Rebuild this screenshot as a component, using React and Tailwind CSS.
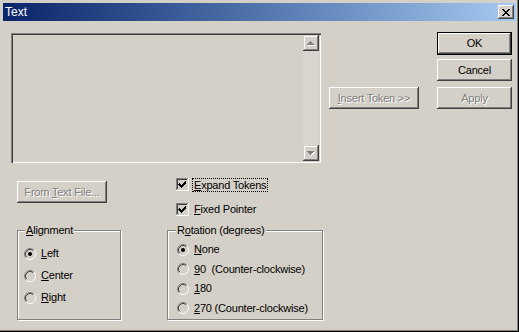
import React from "react";

function Radio({ checked }) {
  return (
    <svg width="12" height="12" viewBox="0 0 12 12" className="shrink-0">
      <circle cx="6" cy="6" r="5" fill="#d4d0c8" />
      <path d="M2.11 9.89 A5.5 5.5 0 0 1 9.89 2.11" fill="none" stroke="#808080" strokeWidth="1" />
      <path d="M9.89 2.11 A5.5 5.5 0 0 1 2.11 9.89" fill="none" stroke="#ffffff" strokeWidth="1" />
      <path d="M2.82 9.18 A4.5 4.5 0 0 1 9.18 2.82" fill="none" stroke="#404040" strokeWidth="1" />
      <path d="M9.18 2.82 A4.5 4.5 0 0 1 2.82 9.18" fill="none" stroke="#d4d0c8" strokeWidth="1" />
      {checked && <circle cx="6" cy="6" r="2" fill="#000000" />}
    </svg>
  );
}

function Check() {
  return (
    <svg width="13" height="13" viewBox="0 0 13 13" className="shrink-0" shapeRendering="crispEdges">
      <rect x="0" y="0" width="13" height="13" fill="#ffffff" />
      <rect x="0" y="0" width="12" height="12" fill="#808080" />
      <rect x="1" y="1" width="11" height="11" fill="#d4d0c8" />
      <rect x="1" y="1" width="10" height="10" fill="#404040" />
      <rect x="2" y="2" width="9" height="9" fill="#d4d0c8" />
      <path d="M3 5h1v1h1v1h1v-1h1v-1h1v-1h1v-1h1v3h-1v1h-1v1h-1v1h-1v1h-1v-1h-1v-1h-1v-1h-1z" fill="#000000" />
    </svg>
  );
}

function ArrowBtn({ up }) {
  return (
    <div className="w-[16px] h-[16px] flex items-center justify-center bg-[#d4d0c8] shadow-[inset_-1px_-1px_#404040,inset_1px_1px_#d4d0c8,inset_-2px_-2px_#808080,inset_2px_2px_#ffffff]">
      <svg width="8" height="5" viewBox="0 0 8 5" shapeRendering="crispEdges">
        {up ? (
          <>
            <path d="M4 1h1v1h1v1h1v1h1v1h-7v-1h1v-1h1v-1h1z" fill="#ffffff" />
            <path d="M3 0h1v1h1v1h1v1h1v1h-7v-1h1v-1h1z" fill="#808080" />
          </>
        ) : (
          <>
            <path d="M1 1h7v1h-1v1h-1v1h-1v1h-1v-1h-1v-1h-1z" fill="#ffffff" />
            <path d="M0 0h7v1h-1v1h-1v1h-1v1h-1v-1h-1v-1h-1z" fill="#808080" />
          </>
        )}
      </svg>
    </div>
  );
}

export default function App() {
  return (
    <div className="w-[519px] h-[332px] bg-[#d4d0c8] pt-[3px] px-[3px] overflow-hidden font-['Liberation_Sans',Arial,sans-serif] text-[11px] leading-[13px] tracking-[-0.2px] text-black shadow-[inset_-1px_-1px_#000000,inset_-2px_-2px_#808080]">
      <div className="h-[18px] flex items-center justify-between bg-linear-to-r from-[#0a246a] to-[#a6caf0]">
        <span className="pl-[2px] text-white text-[12px] tracking-normal">Text</span>
        <div className="mr-[2px] w-[16px] h-[14px] flex items-center justify-center bg-[#d4d0c8] shadow-[inset_-1px_-1px_#404040,inset_1px_1px_#ffffff,inset_-2px_-2px_#808080]">
          <svg width="8" height="7" viewBox="0 0 8 7" shapeRendering="crispEdges">
            <path d="M0 0h2v1h1v1h2v-1h1v-1h2v1h-1v1h-1v1h-1v1h1v1h1v1h1v1h-2v-1h-1v-1h-2v1h-1v1h-2v-1h1v-1h1v-1h1v-1h-1v-1h-1v-1h-1z" fill="#000000" />
          </svg>
        </div>
      </div>

      <div className="flex">
        <div className="ml-[8px] mt-[12px] w-[312px]">
          <div className="w-[310px] h-[130px] bg-[#d4d0c8] p-[2px] shadow-[inset_1px_1px_#808080,inset_2px_2px_#404040,inset_-1px_-1px_#ffffff,inset_-2px_-2px_#d4d0c8]">
            <div className="h-full flex justify-end">
              <div className="w-[16px] h-full flex flex-col justify-between bg-[#d8d5ce]">
                <ArrowBtn up />
                <ArrowBtn />
              </div>
            </div>
          </div>

          <div className="h-[67px] flex items-start">
            <div className="ml-[6px] mt-[18px] w-[90px] h-[22px] flex items-center justify-center bg-[#d4d0c8] shadow-[inset_-1px_-1px_#404040,inset_1px_1px_#ffffff,inset_-2px_-2px_#808080] text-[#808080] [text-shadow:1px_1px_0_#ffffff]">
              <span>
                From <u className="underline-offset-[1px]">T</u>ext File...
              </span>
            </div>
            <div className="ml-[69px] mt-[15px] flex flex-col gap-[12px]">
              <div className="flex items-center h-[13px]">
                <Check />
                <span className="ml-[3px] px-[1px] border border-dotted border-black leading-[12px]">
                  <u className="underline-offset-[1px]">E</u>xpand Tokens
                </span>
              </div>
              <div className="flex items-center h-[13px]">
                <Check />
                <span className="ml-[4px] px-[1px]">
                  <u className="underline-offset-[1px]">F</u>ixed Pointer
                </span>
              </div>
            </div>
          </div>

          <div className="flex">
            <div className="relative ml-[6px] w-[104px] h-[90px] border border-[#808080] shadow-[inset_1px_1px_#ffffff,1px_1px_#ffffff]">
              <span className="absolute left-[7px] top-[-7px] bg-[#d4d0c8] px-[1px]">
                <u className="underline-offset-[1px]">A</u>lignment
              </span>
              <div className="pt-[16px] pl-[6px] flex flex-col gap-[9px]">
                <div className="flex items-center h-[13px]">
                  <Radio checked />
                  <span className="ml-[5px]"><u className="underline-offset-[1px]">L</u>eft</span>
                </div>
                <div className="flex items-center h-[13px]">
                  <Radio />
                  <span className="ml-[5px]"><u className="underline-offset-[1px]">C</u>enter</span>
                </div>
                <div className="flex items-center h-[13px]">
                  <Radio />
                  <span className="ml-[5px]"><u className="underline-offset-[1px]">R</u>ight</span>
                </div>
              </div>
            </div>

            <div className="relative ml-[46px] w-[156px] h-[90px] border border-[#808080] shadow-[inset_1px_1px_#ffffff,1px_1px_#ffffff]">
              <span className="absolute left-[8px] top-[-7px] bg-[#d4d0c8] px-[1px]">
                R<u className="underline-offset-[1px]">o</u>tation (degrees)
              </span>
              <div className="pt-[12px] pl-[9px] flex flex-col gap-[6.5px]">
                <div className="flex items-center h-[13px]">
                  <Radio checked />
                  <span className="ml-[5px]"><u className="underline-offset-[1px]">N</u>one</span>
                </div>
                <div className="flex items-center h-[13px]">
                  <Radio />
                  <span className="ml-[5px] whitespace-pre"><u className="underline-offset-[1px]">9</u>0  (Counter-clockwise)</span>
                </div>
                <div className="flex items-center h-[13px]">
                  <Radio />
                  <span className="ml-[5px]"><u className="underline-offset-[1px]">1</u>80</span>
                </div>
                <div className="flex items-center h-[13px]">
                  <Radio />
                  <span className="ml-[5px] whitespace-pre"><u className="underline-offset-[1px]">2</u>70 (Counter-clockwise)</span>
                </div>
              </div>
            </div>
          </div>
        </div>

        <div className="ml-[6px] mt-[66px] w-[90px] h-[22px] flex items-center justify-center bg-[#d4d0c8] shadow-[inset_-1px_-1px_#404040,inset_1px_1px_#ffffff,inset_-2px_-2px_#808080] text-[#808080] [text-shadow:1px_1px_0_#ffffff]">
          <span>
            <u className="underline-offset-[1px]">I</u>nsert Token &gt;&gt;
          </span>
        </div>

        <div className="ml-[18px] mt-[11px] w-[75px] flex flex-col">
          <div className="h-[23px] border border-black flex items-center justify-center bg-[#d4d0c8] shadow-[inset_-1px_-1px_#404040,inset_1px_1px_#ffffff,inset_-2px_-2px_#808080]">
            <span>OK</span>
          </div>
          <div className="mt-[4px] h-[22px] flex items-center justify-center bg-[#d4d0c8] shadow-[inset_-1px_-1px_#404040,inset_1px_1px_#ffffff,inset_-2px_-2px_#808080]">
            <span>Cancel</span>
          </div>
          <div className="mt-[6px] h-[22px] flex items-center justify-center bg-[#d4d0c8] shadow-[inset_-1px_-1px_#404040,inset_1px_1px_#ffffff,inset_-2px_-2px_#808080] text-[#808080] [text-shadow:1px_1px_0_#ffffff]">
            <span>Apply</span>
          </div>
        </div>
      </div>
    </div>
  );
}
